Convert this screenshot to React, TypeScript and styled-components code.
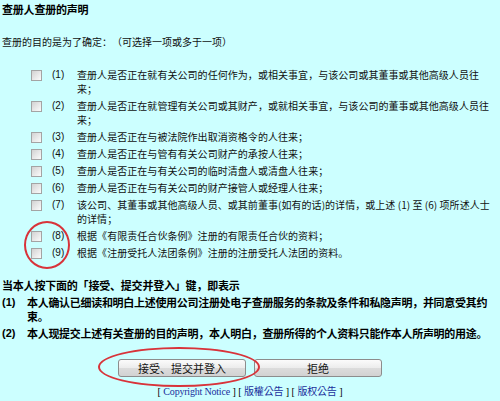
import styled, { createGlobalStyle } from 'styled-components';

const GlobalStyle = createGlobalStyle`
	html, body {
		margin: 0;
		padding: 0;
		background: #ccffff;
	}
	body {
		font-family: "Noto Sans CJK SC", "Liberation Sans", sans-serif;
		color: #111;
		text-spacing-trim: space-all;
	}
`;

const items: string[] = [
	'查册人是否正在就有关公司的任何作为，或相关事宜，与该公司或其董事或其他高级人员往来；',
	'查册人是否正在就管理有关公司或其财产，或就相关事宜，与该公司的董事或其他高级人员往来；',
	'查册人是否正在与被法院作出取消资格令的人往来；',
	'查册人是否正在与管有有关公司财产的承按人往来；',
	'查册人是否正在与有关公司的临时清盘人或清盘人往来；',
	'查册人是否正在与有关公司的财产接管人或经理人往来；',
	'该公司、其董事或其他高级人员、或其前董事(如有的话)的详情，或上述 (1) 至 (6) 项所述人士的详情；',
	'根据《有限责任合伙条例》注册的有限责任合伙的资料；',
	'根据《注册受托人法团条例》注册的注册受托人法团的资料。',
];

const terms: string[] = [
	'本人确认已细读和明白上述使用公司注册处电子查册服务的条款及条件和私隐声明，并同意受其约束。',
	'本人现提交上述有关查册的目的声明，本人明白，查册所得的个人资料只能作本人所声明的用途。',
];

export default function App() {
	return (
		<>
			<GlobalStyle />
			<Page>
				<Title>查册人查册的声明</Title>
				<Intro>查册的目的是为了确定：（可选择一项或多于一项）</Intro>
				<List>
					{items.map((text, i) => (
						<Row key={i}>
							<CheckCell>
								<Check type="checkbox" />
							</CheckCell>
							<Num>({i + 1})</Num>
							<ItemText>{text}</ItemText>
						</Row>
					))}
				</List>
				<Heading>当本人按下面的「接受、提交并登入」键，即表示</Heading>
				{terms.map((t, i) => (
					<Term key={i}>
						<TermNum>({i + 1})</TermNum>
						<TermText>{t}</TermText>
					</Term>
				))}
				<Buttons>
					<Button>接受、提交并登入</Button>
					<Button>拒绝</Button>
				</Buttons>
				<Footer>
					[ <Link href="#">Copyright Notice</Link> ] [ <Link href="#">版權公告</Link> ] [{' '}
					<Link href="#">版权公告</Link> ]
				</Footer>
				<Ring $left={24} $top={221} $w={46} $h={48} />
				<Ring $left={98} $top={347} $w={162} $h={40} />
			</Page>
		</>
	);
}

const Page = styled.div`
	position: relative;
	width: 500px;
	height: 401px;
	padding: 2px 0 0 2px;
	box-sizing: border-box;
	overflow: hidden;
`;

const Title = styled.div`
	font-size: 11px;
	font-weight: 700;
	line-height: 14px;
	color: #000;
	letter-spacing: -0.2px;
`;

const Intro = styled.div`
	margin-top: 19px;
	font-size: 10px;
	line-height: 14px;
`;

const List = styled.div`
	margin-top: 17px;
	display: flex;
	flex-direction: column;
`;

const Row = styled.div`
	display: grid;
	grid-template-columns: 50px 25px 415px;
	padding: 1.5px 0;
	line-height: 14px;
	font-size: 10px;
	letter-spacing: 0.05px;
`;

const CheckCell = styled.div`
	padding: 2px 0 0 29px;
`;

const Check = styled.input`
	appearance: none;
	display: block;
	margin: 0;
	width: 11px;
	height: 11px;
	border: 1px solid #a4a4a4;
	box-sizing: border-box;
	background: linear-gradient(135deg, #d2d2d2 0%, #ebebeb 60%, #fbfbfb 100%);
`;

const Num = styled.span`
	font-family: "Liberation Sans", sans-serif;
	font-size: 10px;
	letter-spacing: 0;
`;

const ItemText = styled.span``;

const Heading = styled.div`
	margin-top: 17px;
	font-size: 11px;
	font-weight: 700;
	line-height: 14px;
	letter-spacing: -0.2px;
	color: #000;
`;

const Term = styled.div`
	margin-top: 3px;
	display: grid;
	grid-template-columns: 25px 470px;
	font-size: 11px;
	font-weight: 700;
	line-height: 14px;
	letter-spacing: -0.3px;
	color: #000;
`;

const TermNum = styled.span`
	font-family: "Liberation Sans", sans-serif;
	letter-spacing: 0;
`;

const TermText = styled.span``;

const Buttons = styled.div`
	margin-top: 19px;
	display: flex;
	justify-content: center;
	gap: 8px;
	padding-right: 2px;
`;

const Button = styled.button`
	width: 128px;
	height: 18px;
	padding: 0;
	border: 1px solid #8c8c8c;
	border-radius: 3px;
	background: linear-gradient(#fbfbfb 0%, #ececec 50%, #dcdcdc 51%, #d2d2d2 100%);
	font-family: "Noto Sans CJK SC", sans-serif;
	font-size: 11px;
	line-height: 16px;
	color: #111;
`;

const Footer = styled.div`
	margin-top: 8px;
	text-align: center;
	padding-right: 2px;
	font-family: "Liberation Serif", "Noto Sans CJK SC", serif;
	font-size: 10px;
	line-height: 14px;
	color: #000;
`;

const Link = styled.a`
	color: #1a2f9c;
	text-decoration: none;
	font-family: "Liberation Serif", "Noto Sans CJK TC", "Noto Sans CJK SC", serif;
	letter-spacing: -0.2px;
`;

const Ring = styled.div<{ $left: number; $top: number; $w: number; $h: number }>`
	position: absolute;
	left: ${(p) => p.$left}px;
	top: ${(p) => p.$top}px;
	width: ${(p) => p.$w}px;
	height: ${(p) => p.$h}px;
	border: 2px solid #d8333a;
	border-radius: 50%;
	box-sizing: border-box;
	pointer-events: none;
`;
